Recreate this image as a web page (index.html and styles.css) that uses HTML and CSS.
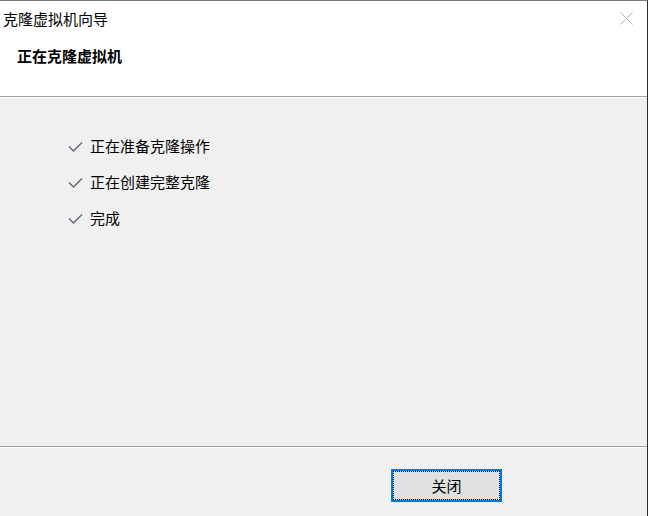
FILE: index.html
```html
<!DOCTYPE html>
<html lang="zh-CN">
<head>
<meta charset="utf-8">
<title>克隆虚拟机向导</title>
<link rel="stylesheet" href="styles.css">
</head>
<body>
<div class="window">
  <div class="titlebar">
    <span class="title">克隆虚拟机向导</span>
    <svg class="close" width="13" height="13" viewBox="0 0 13 13" aria-hidden="true">
      <path d="M0.5 0.5 L12.5 12.5 M12.5 0.5 L0.5 12.5" stroke="#b4b4b4" stroke-width="1" fill="none"/>
    </svg>
  </div>
  <div class="header">正在克隆虚拟机</div>
  <div class="content">
    <ul class="steps">
      <li class="step"><svg class="check" width="15" height="10" viewBox="0 0 15 10" aria-hidden="true"><polyline points="1,4.5 5.5,9 14,0.5" fill="none" stroke="#5d6873" stroke-width="1.3"/></svg><span>正在准备克隆操作</span></li>
      <li class="step"><svg class="check" width="15" height="10" viewBox="0 0 15 10" aria-hidden="true"><polyline points="1,4.5 5.5,9 14,0.5" fill="none" stroke="#5d6873" stroke-width="1.3"/></svg><span>正在创建完整克隆</span></li>
      <li class="step"><svg class="check" width="15" height="10" viewBox="0 0 15 10" aria-hidden="true"><polyline points="1,4.5 5.5,9 14,0.5" fill="none" stroke="#5d6873" stroke-width="1.3"/></svg><span>完成</span></li>
    </ul>
  </div>
  <div class="footer">
    <button class="btn" type="button">关闭</button>
  </div>
</div>
</body>
</html>
```
FILE: styles.css
```css
* { box-sizing: border-box; }
html, body {
  margin: 0;
  padding: 0;
  background: #f0f0f0;
}
body {
  font-family: "Noto Sans CJK SC", "Noto Sans", sans-serif;
  font-size: 15px;
  color: #000;
}
.window {
  width: 648px;
  height: 516px;
  display: flex;
  flex-direction: column;
  border-top: 1px solid #7d7d7d;
  border-right: 1px solid #2b2b2b;
  background: #f0f0f0;
}
.titlebar {
  height: 37px;
  background: #fff;
  display: flex;
  align-items: flex-start;
  justify-content: space-between;
  padding-left: 3px;
  padding-right: 14px;
}
.title {
  line-height: 35px;
  font-size: 15px;
}
.close {
  display: block;
  margin-top: 11px;
}
.header {
  height: 59px;
  background: #fff;
  padding-left: 17px;
  line-height: 36px;
  font-weight: bold;
  font-size: 15px;
  border-bottom: 1px solid #a0a0a0;
}
.content {
  flex: 1;
  border-top: 1px solid #fff;
  border-bottom: 1px solid #a0a0a0;
  padding-top: 29px;
}
.steps {
  list-style: none;
  margin: 0;
  padding: 0 0 0 68px;
}
.step {
  display: flex;
  align-items: center;
  height: 36px;
  gap: 7px;
}
.check {
  display: block;
  margin-top: 4px;
}
.footer {
  height: 69px;
  border-top: 1px solid #fff;
  padding-top: 21px;
  padding-left: 391px;
}
.btn {
  width: 111px;
  height: 33px;
  border: 2px solid #0078d7;
  background: #e1e1e1;
  outline: 1px dotted #000;
  outline-offset: -3px;
  font-family: "Noto Sans CJK SC", "Noto Sans", sans-serif;
  font-size: 15px;
  color: #000;
  padding: 0;
  line-height: 1;
}
```
